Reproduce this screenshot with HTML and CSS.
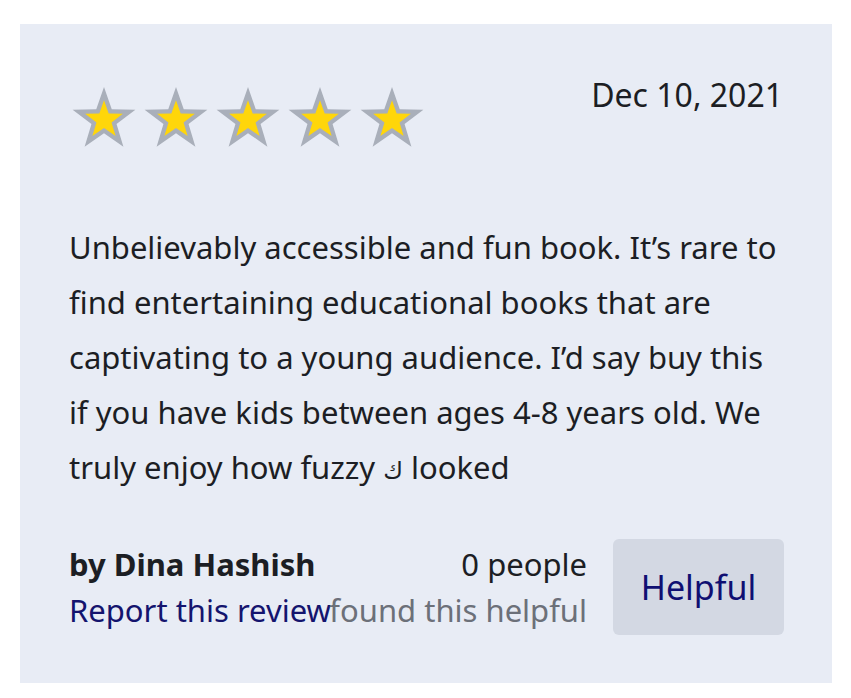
FILE: index.html
```html
<!DOCTYPE html>
<html lang="en">
<head>
<meta charset="utf-8">
<title>Review</title>
<link rel="stylesheet" href="styles.css">
</head>
<body>
<article class="review">
  <header class="review-head">
    <div class="stars" aria-label="5 out of 5 stars">
      <svg class="star" viewBox="-50 -50 100 91" width="66" height="62"><polygon class="star-out" points="0,-50 11.76,-16.18 47.55,-15.45 19.02,6.18 29.39,40.45 0,20 -29.39,40.45 -19.02,6.18 -47.55,-15.45 -11.76,-16.18"/><polygon class="star-in" transform="scale(0.6)" points="0,-50 11.76,-16.18 47.55,-15.45 19.02,6.18 29.39,40.45 0,20 -29.39,40.45 -19.02,6.18 -47.55,-15.45 -11.76,-16.18"/></svg>
      <svg class="star" viewBox="-50 -50 100 91" width="66" height="62"><polygon class="star-out" points="0,-50 11.76,-16.18 47.55,-15.45 19.02,6.18 29.39,40.45 0,20 -29.39,40.45 -19.02,6.18 -47.55,-15.45 -11.76,-16.18"/><polygon class="star-in" transform="scale(0.6)" points="0,-50 11.76,-16.18 47.55,-15.45 19.02,6.18 29.39,40.45 0,20 -29.39,40.45 -19.02,6.18 -47.55,-15.45 -11.76,-16.18"/></svg>
      <svg class="star" viewBox="-50 -50 100 91" width="66" height="62"><polygon class="star-out" points="0,-50 11.76,-16.18 47.55,-15.45 19.02,6.18 29.39,40.45 0,20 -29.39,40.45 -19.02,6.18 -47.55,-15.45 -11.76,-16.18"/><polygon class="star-in" transform="scale(0.6)" points="0,-50 11.76,-16.18 47.55,-15.45 19.02,6.18 29.39,40.45 0,20 -29.39,40.45 -19.02,6.18 -47.55,-15.45 -11.76,-16.18"/></svg>
      <svg class="star" viewBox="-50 -50 100 91" width="66" height="62"><polygon class="star-out" points="0,-50 11.76,-16.18 47.55,-15.45 19.02,6.18 29.39,40.45 0,20 -29.39,40.45 -19.02,6.18 -47.55,-15.45 -11.76,-16.18"/><polygon class="star-in" transform="scale(0.6)" points="0,-50 11.76,-16.18 47.55,-15.45 19.02,6.18 29.39,40.45 0,20 -29.39,40.45 -19.02,6.18 -47.55,-15.45 -11.76,-16.18"/></svg>
      <svg class="star" viewBox="-50 -50 100 91" width="66" height="62"><polygon class="star-out" points="0,-50 11.76,-16.18 47.55,-15.45 19.02,6.18 29.39,40.45 0,20 -29.39,40.45 -19.02,6.18 -47.55,-15.45 -11.76,-16.18"/><polygon class="star-in" transform="scale(0.6)" points="0,-50 11.76,-16.18 47.55,-15.45 19.02,6.18 29.39,40.45 0,20 -29.39,40.45 -19.02,6.18 -47.55,-15.45 -11.76,-16.18"/></svg>
    </div>
    <time class="date">Dec 10, 2021</time>
  </header>
  <p class="review-body">Unbelievably accessible and fun book. It’s rare to find entertaining educational books that are captivating to a young audience. I’d say buy this if you have kids between ages 4-8 years old. We truly enjoy how fuzzy <span class="arabic">ك</span> looked</p>
  <footer class="review-foot">
    <div class="author">
      <div class="author-name">by Dina Hashish</div>
      <a class="report" href="#">Report this review</a>
    </div>
    <div class="votes">
      <div class="votes-count">0 people</div>
      <div class="votes-label">found this helpful</div>
    </div>
    <button class="helpful" type="button">Helpful</button>
  </footer>
</article>
</body>
</html>
```

FILE: styles.css
```css
html, body {
  margin: 0;
  background: #ffffff;
}
body {
  padding: 24px 19px 15px 20px;
  font-family: "Noto Sans", Lato, sans-serif;
  color: #1c1e24;
}
.review {
  background: #e8ecf5;
  padding: 52px 48px 48px 49px;
}
.review-head {
  display: flex;
  justify-content: space-between;
  align-items: flex-start;
}
.stars {
  display: flex;
  gap: 6px;
  margin-top: 10px;
  margin-left: 2px;
}
.star {
  display: block;
}
.star-out {
  fill: #a9afba;
}
.star-in {
  fill: #ffd60a;
}
.date {
  font-size: 32px;
  line-height: 38px;
  margin-right: 1px;
  color: #1c1e24;
}
.review-body {
  margin: 72px 0 0;
  font-size: 31px;
  line-height: 55px;
}
.arabic {
  display: inline-block;
  font-family: "DejaVu Sans", sans-serif;
  font-size: 24px;
  line-height: 24px;
}
.review-foot {
  display: flex;
  align-items: center;
  margin-top: 44px;
}
.author {
  flex: 1 1 auto;
  min-width: 0;
  font-size: 31px;
  line-height: 46px;
  white-space: nowrap;
}
.author-name {
  font-weight: 700;
}
.report {
  color: #14146e;
  text-decoration: none;
}
.votes {
  flex: 0 0 auto;
  text-align: right;
  font-size: 31px;
  line-height: 46px;
  margin-right: 26px;
  white-space: nowrap;
}
.votes-label {
  color: #6c7079;
}
.helpful {
  flex: 0 0 171px;
  width: 171px;
  height: 96px;
  border: none;
  border-radius: 6px;
  background: #d3d8e3;
  color: #0f0f72;
  font-family: "Noto Sans", Lato, sans-serif;
  font-size: 34px;
  padding: 0;
}
```
